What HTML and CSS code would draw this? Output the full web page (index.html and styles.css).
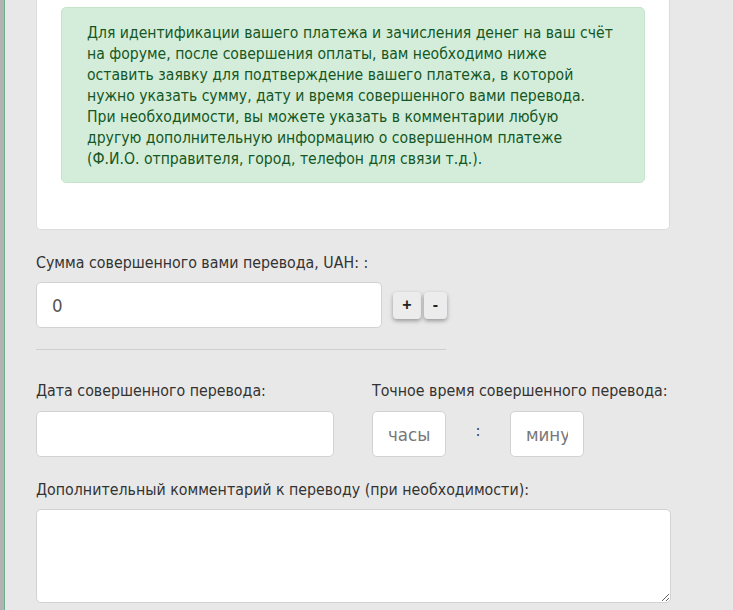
FILE: index.html
```html
<!DOCTYPE html>
<html lang="ru">
<head>
<meta charset="utf-8">
<link rel="stylesheet" href="styles.css">
</head>
<body>
<div class="page">
  <div class="card">
    <div class="alert">
      Для идентификации вашего платежа и зачисления денег на ваш счёт<br>
      на форуме, после совершения оплаты, вам необходимо ниже<br>
      оставить заявку для подтверждение вашего платежа, в которой<br>
      нужно указать сумму, дату и время совершенного вами перевода.<br>
      При необходимости, вы можете указать в комментарии любую<br>
      другую дополнительную информацию о совершенном платеже<br>
      (Ф.И.О. отправителя, город, телефон для связи т.д.).
    </div>
  </div>

  <div class="field sum">
    <label class="label">Сумма совершенного вами перевода, UAH: :</label>
    <div class="sum-row">
      <input class="input sum-input" type="text" value="0">
      <div class="steppers">
        <button class="btn plus">+</button>
        <button class="btn minus">-</button>
      </div>
    </div>
  </div>

  <hr class="divider">

  <div class="row">
    <div class="col date-col">
      <label class="label">Дата совершенного перевода:</label>
      <input class="input date-input" type="text">
    </div>
    <div class="col time-col">
      <label class="label">Точное время совершенного перевода:</label>
      <div class="time-row">
        <input class="input time-input" type="text" placeholder="часы">
        <span class="colon">:</span>
        <input class="input time-input" type="text" placeholder="минуты">
      </div>
    </div>
  </div>

  <div class="field comment">
    <label class="label">Дополнительный комментарий к переводу (при необходимости):</label>
    <textarea class="input textarea"></textarea>
  </div>
</div>
</body>
</html>
```

FILE: styles.css
```css
html, body {
  margin: 0;
  padding: 0;
}
body {
  background: #e8e8e8;
  border-left: 4px solid #b2b2b2;
  font-family: "DejaVu Sans Condensed", "Liberation Sans Narrow", "DejaVu Sans", sans-serif;
  font-stretch: condensed;
  color: #333;
  min-height: 610px;
  box-sizing: border-box;
}
.page {
  border-left: 1px solid #6fae8a;
  padding-left: 31px;
  min-height: 610px;
  box-sizing: border-box;
}
.card {
  width: 634px;
  box-sizing: border-box;
  background: #fff;
  border: 1px solid #dcdcdc;
  border-top: none;
  border-radius: 0 0 5px 5px;
  padding: 7px 24px 46px;
}
.alert {
  background: #d4edda;
  border: 1px solid #c3e6cb;
  border-radius: 5px;
  color: #155724;
  font-size: 15.6px;
  line-height: 21px;
  padding: 15px 20px 12px 25px;
  white-space: nowrap;
}
.label {
  display: block;
  font-size: 15.8px;
  line-height: 21px;
  color: #333;
}
.sum {
  margin-top: 22px;
}
.sum-row {
  display: flex;
  align-items: center;
  margin-top: 9px;
}
.input {
  box-sizing: border-box;
  background: #fff;
  border: 1px solid #d2d2d2;
  border-radius: 5px;
  height: 46px;
  padding: 0 15px;
  font-family: inherit;
  font-stretch: condensed;
  font-size: 18.5px;
  color: #555;
  outline: none;
  display: block;
}
.input::placeholder {
  color: #777;
}
.sum-input {
  width: 346px;
}
.steppers {
  display: flex;
  gap: 3px;
  margin-left: 11px;
}
.btn {
  height: 27px;
  border: none;
  border-radius: 4px;
  background: #ececec;
  box-shadow: 0 2px 4px rgba(0,0,0,0.35);
  font-family: "Liberation Sans", sans-serif;
  font-weight: bold;
  font-size: 16px;
  color: #222;
  padding: 0;
}
.plus { width: 28px; }
.minus { width: 23px; }
.divider {
  width: 410px;
  margin: 21px 0 0 0;
  border: none;
  border-top: 1px solid #cfcfcf;
  height: 0;
}
.row {
  display: flex;
  margin-top: 30px;
}
.date-col {
  width: 336px;
}
.date-input {
  width: 298px;
  margin-top: 10px;
}
.time-row {
  display: flex;
  align-items: center;
  margin-top: 10px;
}
.time-input {
  width: 74px;
}
.colon {
  width: 64px;
  text-align: center;
  font-size: 15px;
  margin-top: -6px;
}
.comment {
  margin-top: 22px;
}
.textarea {
  width: 635px;
  height: 94px;
  margin-top: 9px;
  resize: vertical;
}
```
